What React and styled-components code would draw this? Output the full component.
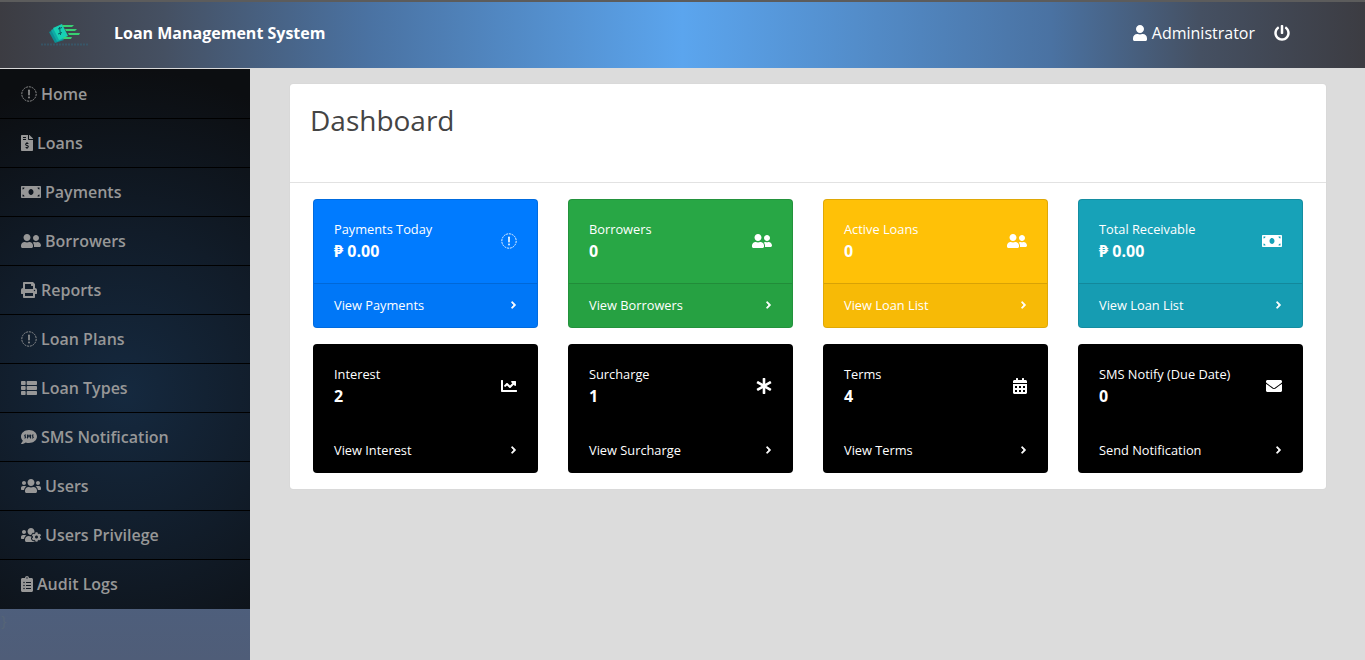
import React from "react";
import styled, { createGlobalStyle } from "styled-components";
import {
  FaAsterisk, FaCalendarAlt, FaChartLine, FaChevronRight, FaClipboardList, FaEnvelope,
  FaFileInvoiceDollar, FaMoneyBill, FaPowerOff, FaPrint, FaSms, FaThList, FaUser,
  FaUserFriends, FaUsers, FaUsersCog,
} from "react-icons/fa";

function BrokenIcon() {
  return (
    <svg viewBox="0 0 16 16" fill="none">
      <circle cx="8" cy="8" r="7.2" stroke="currentColor" strokeWidth="0.9" strokeDasharray="2 0.8" />
      <rect x="7.2" y="3.6" width="1.6" height="5.8" rx="0.6" fill="currentColor" />
      <rect x="7.2" y="10.6" width="1.6" height="1.7" fill="currentColor" />
    </svg>
  );
}

function Logo() {
  return (
    <svg width="47" height="22" viewBox="0 0 47 22">
      <path d="M8 8 L17 4 L23 16 L14 19 Z" fill="#0d8f94" />
      <path d="M10 6 L19 2 L25 14 L16 17.5 Z" fill="#10aaa6" />
      <path d="M12 4 L21 0 L27 12 L18 16 Z" fill="#17d0b4" />
      <path d="M21 1 H33 L31 3 H22 Z M24 5 H36 L34 7 H25 Z M27 9 H39 L38 11 H28 Z M23 13 H31 L30 15 H22 Z" fill="#38cf72" />
      <path d="M17 5 L21 3.5 M17 10 L21 8.5 M18.5 3 L19.5 11" stroke="#0b5e63" strokeWidth="1" />
      <path d="M0 20.5 H47" stroke="#2f6f8a" strokeWidth="2" strokeDasharray="2 1" opacity="0.4" />
    </svg>
  );
}

const navItems = [
  { label: "Home", icon: <BrokenIcon />, width: 16 },
  { label: "Loans", icon: <FaFileInvoiceDollar />, width: 12 },
  { label: "Payments", icon: <FaMoneyBill />, width: 20 },
  { label: "Borrowers", icon: <FaUserFriends />, width: 20 },
  { label: "Reports", icon: <FaPrint />, width: 16 },
  { label: "Loan Plans", icon: <BrokenIcon />, width: 16 },
  { label: "Loan Types", icon: <FaThList />, width: 16 },
  { label: "SMS Notification", icon: <FaSms />, width: 16 },
  { label: "Users", icon: <FaUsers />, width: 20 },
  { label: "Users Privilege", icon: <FaUsersCog />, width: 20 },
  { label: "Audit Logs", icon: <FaClipboardList />, width: 12 },
];

const cards = [
  { title: "Payments Today", value: "₱ 0.00", link: "View Payments", tone: "blue", icon: <BrokenIcon />, width: 16 },
  { title: "Borrowers", value: "0", link: "View Borrowers", tone: "green", icon: <FaUserFriends />, width: 20 },
  { title: "Active Loans", value: "0", link: "View Loan List", tone: "yellow", icon: <FaUserFriends />, width: 20 },
  { title: "Total Receivable", value: "₱ 0.00", link: "View Loan List", tone: "teal", icon: <FaMoneyBill />, width: 20 },
  { title: "Interest", value: "2", link: "View Interest", tone: "black", icon: <FaChartLine />, width: 16 },
  { title: "Surcharge", value: "1", link: "View Surcharge", tone: "black", icon: <FaAsterisk />, width: 16 },
  { title: "Terms", value: "4", link: "View Terms", tone: "black", icon: <FaCalendarAlt />, width: 14 },
  { title: "SMS Notify (Due Date)", value: "0", link: "Send Notification", tone: "black", icon: <FaEnvelope />, width: 16 },
];

export default function App() {
  return (
    <>
      <GlobalStyle />
      <Page>
        <Header>
          <Brand>
            <LogoBox><Logo /></LogoBox>
            <BrandName>Loan Management System</BrandName>
          </Brand>
          <Account>
            <AccountName><Glyph $width={14}><FaUser /></Glyph> Administrator</AccountName>
            <Glyph $width={16}><FaPowerOff /></Glyph>
          </Account>
        </Header>
        <Body>
          <Sidebar>
            <Nav>
              {navItems.map(item => (
                <NavItem key={item.label}>
                  <Glyph $width={item.width}>{item.icon}</Glyph>
                  {item.label}
                </NavItem>
              ))}
            </Nav>
            <Stray>{"}"}</Stray>
          </Sidebar>
          <Main>
            <Panel>
              <PanelHead>
                <Title>Dashboard</Title>
              </PanelHead>
              <Grid>
                {cards.map(card => (
                  <StatCard key={card.title} $tone={card.tone}>
                    <CardBody>
                      <div>
                        <CardTitle>{card.title}</CardTitle>
                        <CardValue>{card.value}</CardValue>
                      </div>
                      <Glyph $width={card.width}>{card.icon}</Glyph>
                    </CardBody>
                    <CardFoot $tone={card.tone}>
                      {card.link}
                      <Chevron><FaChevronRight /></Chevron>
                    </CardFoot>
                  </StatCard>
                ))}
              </Grid>
            </Panel>
          </Main>
        </Body>
      </Page>
    </>
  );
}

const GlobalStyle = createGlobalStyle`
  html, body {
    margin: 0;
    height: 100%;
    overflow: hidden;
    font-family: "Open Sans", "Noto Sans", sans-serif;
  }
  * {
    box-sizing: border-box;
  }
`;

const tones = {
  blue: "#007bff",
  green: "#28a745",
  yellow: "#ffc107",
  teal: "#17a2b8",
  black: "#000000",
};

const Page = styled.div`
  display: flex;
  flex-direction: column;
  height: 660px;
  background: #dcdcdc;
`;

const Glyph = styled.span`
  display: flex;
  flex: none;

  svg {
    height: 16px;
    width: ${p => p.$width}px;
  }
`;

const Chevron = styled.span`
  display: flex;
  flex: none;
  margin-right: 1px;

  svg {
    height: 8px;
    width: 5px;
    stroke: currentColor;
    stroke-width: 50;
  }
`;

const Header = styled.header`
  height: 68px;
  flex: none;
  display: flex;
  align-items: center;
  justify-content: space-between;
  padding: 0 75px 4px 41px;
  color: #fff;
  border-top: 2px solid #5c5c5c;
  background: linear-gradient(90deg, #3c3c42 0%, #455062 12%, #4a72a2 27%, #5ba5ee 50%, #4a72a2 77%, #455062 88%, #3c3c42 100%);
`;

const Brand = styled.div`
  display: flex;
  align-items: center;
`;

const LogoBox = styled.div`
  width: 73px;
  display: flex;
  padding-top: 3px;
`;

const BrandName = styled.div`
  font-size: 16px;
  font-weight: 700;
`;

const Account = styled.div`
  display: flex;
  align-items: center;
  gap: 19px;
`;

const AccountName = styled.div`
  display: flex;
  align-items: center;
  gap: 5px;
  font-size: 16px;
`;

const Body = styled.div`
  flex: 1;
  display: flex;
  min-height: 0;
`;

const Sidebar = styled.aside`
  width: 250px;
  flex: none;
  display: flex;
  flex-direction: column;
  background: linear-gradient(180deg, #4a6d96 0%, #4a6489 60%, #4f5d78 100%);
`;

const Nav = styled.nav`
  flex: none;
  padding-top: 1px;
  border-top: 1px solid #d8d8d8;
  background: radial-gradient(ellipse 120% 60% at 50% 60%, #15293f 0%, #111c29 50%, #0c0e11 100%);
`;

const NavItem = styled.div`
  height: 49px;
  display: flex;
  align-items: center;
  gap: 4px;
  padding: 0 0 1px 21px;
  font-size: 16px;
  font-weight: 600;
  color: #979797;
  border-bottom: 1px solid #000;

  &:last-child {
    border-bottom: none;
  }
`;

const Stray = styled.div`
  font-size: 15px;
  line-height: 20px;
  margin-top: 1px;
  margin-left: 1px;
  color: #566577;
`;

const Main = styled.main`
  flex: 1;
  padding: 16px 39px 0 40px;
`;

const Panel = styled.section`
  background: #fff;
  border-radius: 3px;
  box-shadow: 0 0 1px rgba(0, 0, 0, 0.13);
`;

const PanelHead = styled.div`
  height: 99px;
  padding: 15px 20px 0;
  border-bottom: 1px solid #e2e2e2;
`;

const Title = styled.h1`
  margin: 0;
  font-size: 28px;
  font-weight: 400;
  line-height: 42px;
  color: #444;
`;

const Grid = styled.div`
  display: grid;
  grid-template-columns: repeat(4, 225px);
  column-gap: 30px;
  row-gap: 16px;
  padding: 16px 23px;
`;

const StatCard = styled.div`
  height: 129px;
  display: flex;
  flex-direction: column;
  color: #fff;
  background: ${p => tones[p.$tone]};
  border: 1px solid rgba(0, 0, 0, 0.125);
  border-radius: 4px;
  overflow: hidden;
`;

const CardBody = styled.div`
  flex: 1;
  display: flex;
  align-items: center;
  justify-content: space-between;
  padding: 0 20px 2px;
`;

const CardTitle = styled.div`
  font-size: 12.8px;
  line-height: 20px;
`;

const CardValue = styled.div`
  font-size: 16px;
  font-weight: 700;
  line-height: 24px;
`;

const CardFoot = styled.div`
  height: 44px;
  flex: none;
  display: flex;
  align-items: center;
  justify-content: space-between;
  padding: 0 20px 2px;
  font-size: 12.8px;
  background: ${p => (p.$tone === "black" ? "transparent" : "rgba(0, 0, 0, 0.03)")};
  border-top: 1px solid ${p => (p.$tone === "black" ? "transparent" : "rgba(0, 0, 0, 0.125)")};
`;
